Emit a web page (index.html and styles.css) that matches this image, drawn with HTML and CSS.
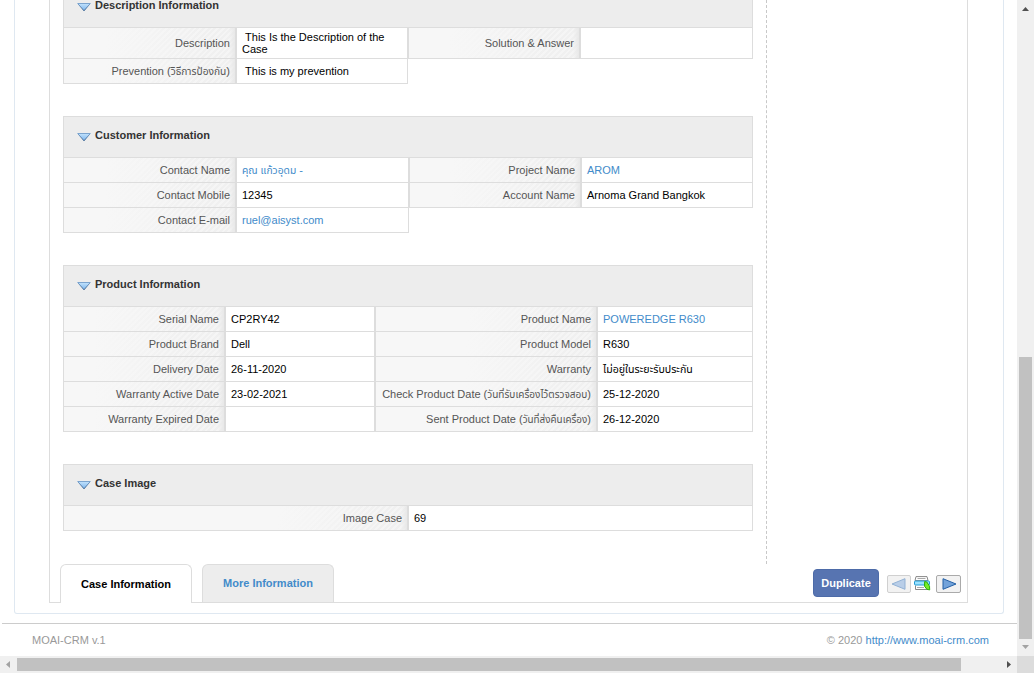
FILE: index.html
```html
<!DOCTYPE html>
<html lang="th">
<head>
<meta charset="utf-8">
<title>MOAI-CRM</title>
<link rel="stylesheet" href="styles.css">
</head>
<body>
<svg class="defs" width="0" height="0" aria-hidden="true">
  <defs>
    <linearGradient id="arrow-fill" x1="0" y1="0" x2="0" y2="1"><stop offset="0" stop-color="#c4e3fc"/><stop offset="1" stop-color="#79b4ee"/></linearGradient>
    <linearGradient id="arrow-line" x1="0" y1="0" x2="0" y2="1"><stop offset="0" stop-color="#7ba4cf"/><stop offset="1" stop-color="#2f5a8a"/></linearGradient>
    <symbol id="chevron" viewBox="0 0 14 9"><path d="M.7.5h12.600L7 7.800z" fill="url(#arrow-fill)" stroke="url(#arrow-line)"/></symbol>
  </defs>
</svg>
<div class="window">
  <div class="viewport">
    <div class="panel">
      <div class="content">
        <div class="details">
          <section class="block block-description">
            <h2><svg class="chevron"><use href="#chevron"/></svg>Description Information</h2>
            <div class="fields cols-description">
              <div class="label">Description</div><div class="value wrap">&nbsp;This Is the Description of the Case</div>
              <div class="label">Solution &amp; Answer</div><div class="value"></div>
              <div class="label">Prevention (<span class="thai t-prevention">วิธีการป้องกัน</span>)</div><div class="value">&nbsp;This is my prevention</div>
            </div>
          </section>
          <section class="block">
            <h2><svg class="chevron"><use href="#chevron"/></svg>Customer Information</h2>
            <div class="fields cols-customer">
              <div class="label">Contact Name</div><div class="value"><a><span class="thai t-contact">คุณ แก้วอุดม</span> -</a></div>
              <div class="label">Project Name</div><div class="value"><a>AROM</a></div>
              <div class="label">Contact Mobile</div><div class="value">12345</div>
              <div class="label">Account Name</div><div class="value">Arnoma Grand Bangkok</div>
              <div class="label">Contact E-mail</div><div class="value"><a>ruel@aisyst.com</a></div>
            </div>
          </section>
          <section class="block">
            <h2><svg class="chevron"><use href="#chevron"/></svg>Product Information</h2>
            <div class="fields cols-product">
              <div class="label">Serial Name</div><div class="value">CP2RY42</div>
              <div class="label">Product Name</div><div class="value"><a>POWEREDGE R630</a></div>
              <div class="label">Product Brand</div><div class="value">Dell</div>
              <div class="label">Product Model</div><div class="value">R630</div>
              <div class="label">Delivery Date</div><div class="value">26-11-2020</div>
              <div class="label">Warranty</div><div class="value"><span class="thai t-warranty">ไม่อยู่ในระยะรับประกัน</span></div>
              <div class="label">Warranty Active Date</div><div class="value">23-02-2021</div>
              <div class="label">Check Product Date (<span class="thai t-check">วันที่รับเครื่องไว้ตรวจสอบ</span>)</div><div class="value">25-12-2020</div>
              <div class="label">Warranty Expired Date</div><div class="value"></div>
              <div class="label">Sent Product Date (<span class="thai t-sent">วันที่ส่งคืนเครื่อง</span>)</div><div class="value">26-12-2020</div>
            </div>
          </section>
          <section class="block">
            <h2><svg class="chevron"><use href="#chevron"/></svg>Case Image</h2>
            <div class="fields cols-image">
              <div class="label">Image Case</div><div class="value">69</div>
            </div>
          </section>
        </div>
        <div class="bottom-bar">
          <div class="tab active">Case Information</div>
          <div class="tab">More Information</div>
          <div class="actions">
            <button class="duplicate">Duplicate</button>
            <button class="nav prev"><svg width="15" height="12" viewBox="0 0 15 12"><path d="M14 .7v10.6L1 6z" fill="#b9cee8" stroke="#92b1d4"/></svg></button>
            <svg class="printer" width="17" height="15" viewBox="0 0 17 15">
              <path d="M2 .6h11l1 4H1z" fill="#fff" stroke="#888"/><path d="M3.500 2.500h8" stroke="#aaa"/>
              <path d="M1.500 9.500v4h12v-4" fill="#fff" stroke="#888"/><path d="M3 11.500h7" stroke="#aaa"/>
              <rect x=".5" y="5" width="15" height="4" rx="1" fill="#9be2ff" stroke="#239bd4"/>
              <path d="M10.600 5.600l2.200.4 2.700 4.200.2 3.700-2.800-.6-2.300-3z" fill="#78ed29" stroke="#2bad08"/>
            </svg>
            <button class="nav next"><svg width="15" height="12" viewBox="0 0 15 12"><path d="M1 .7v10.6L14 6z" fill="#73a3da" stroke="#2560a5"/></svg></button>
          </div>
        </div>
      </div>
    </div>
    <footer><span>MOAI-CRM v.1</span><span>© 2020 <a>http://www.moai-crm.com</a></span></footer>
  </div>
  <div class="scroll-y">
    <svg width="17" height="17"><path d="M5 11h7L8.500 7z" fill="#505050"/></svg>
    <div class="thumb"></div>
    <svg width="17" height="17"><path d="M5 6h7l-3.500 4z" fill="#a3a3a3"/></svg>
  </div>
  <div class="scroll-x">
    <svg width="17" height="17"><path d="M10 5v7L6 8.500z" fill="#a3a3a3"/></svg>
    <div class="thumb"></div>
    <svg width="17" height="17"><path d="M7 5v7l4-3.500z" fill="#505050"/></svg>
  </div>
  <div class="corner"></div>
</div>
</body>
</html>
```
FILE: styles.css
```css
* { box-sizing: border-box; }
body { margin: 0; overflow: hidden; background: #fff; color: #000; font: 11px/12px "Liberation Sans", Arial, sans-serif; }
a { color: #428bca; }
.defs { position: absolute; }
.window { display: grid; grid-template: 656px 17px / 1017px 17px; width: 1034px; height: 673px; }
.viewport { overflow: hidden; }
.panel { width: 990px; height: 614px; margin-left: 14px; padding-left: 34px; border: 1px solid #dfe8f1; border-top: 0; border-radius: 0 0 3px 3px; }
.content { width: 919px; height: 603px; border: 1px solid #ddd; border-top: 0; }
.details { width: 717px; height: 564px; padding-left: 13px; border-right: 1px dashed #c8c8c8; overflow: hidden; }

.block { width: 690px; margin-bottom: 32px; }
.block-description { margin-top: -14px; }
h2 { display: flex; gap: 4px; height: 42px; margin: 0; padding: 12px 0 0 13px; border: 1px solid #ddd; background: #ededed; color: #333; font-size: 11px; line-height: 12px; }
.chevron { width: 14px; height: 9px; margin-top: 4px; }
.fields { display: grid; grid-auto-rows: 25px; }
.cols-description { grid-template: 31px 25px / 173px 172px 172px 173px; }
.cols-customer { grid-template-columns: 173px 173px 172px 172px; }
.cols-product { grid-template-columns: 162px 150px 222px 156px; }
.cols-image { grid-template-columns: 345px 345px; }
.label, .value { border: solid #ddd; border-width: 0 1px 1px; padding: 0 5px; white-space: nowrap; line-height: 24px; overflow: hidden; }
.label {
  color: #555; text-align: right;
  background: linear-gradient(90deg, #f7f7f7 0, #f7f7f7 calc(100% - 130px), rgba(247,247,247,0) calc(100% - 30px)),
    linear-gradient(90deg, transparent calc(100% - 6px), #e8e8e8),
    repeating-linear-gradient(135deg, #f5f5f5 0 2px, #f0f0f0 2px 4px);
}
.cols-description .label:nth-child(-n+4) { line-height: 31px; }
.value.wrap { padding-top: 3px; white-space: normal; line-height: 12px; }
.thai { font-family: "Liberation Sans", "Noto Sans Thai", Loma, sans-serif; line-height: 1; }
.t-prevention { font-size: 10.2px; }
.t-contact { font-size: 10.3px; }
.t-warranty { font-size: 10.6px; }
.t-check { font-size: 10.03px; }
.t-sent { font-size: 9.9px; }

.bottom-bar { display: flex; height: 38px; padding-left: 10px; }
.tab { width: 132px; height: 38px; margin-right: 10px; border: 1px solid #ddd; border-bottom: 0; border-radius: 6px 6px 0 0; background: #ededed; color: #428bca; font-weight: bold; text-align: center; line-height: 37px; }
.tab.active { height: 39px; background: #fff; color: #000; line-height: 39px; }
.actions { display: flex; margin-left: 469px; }
button { padding: 0; font: inherit; }
.duplicate { width: 66px; height: 28px; margin-top: 5px; border: 1px solid #4d6ba8; border-radius: 4px; background: #5774b1; color: #fff; font-weight: bold; }
.nav { display: flex; align-items: center; height: 18px; margin-top: 11px; border: 1px solid #aaa; border-radius: 2px; background: #f2f2f2; }
.prev { width: 24px; margin-left: 8px; padding-left: 3px; border-color: #d0d0d0; }
.printer { margin: 12px 5px 0 3px; }
.next { width: 25px; padding-left: 5px; }

footer { display: flex; justify-content: space-between; margin: 9px 0 0 2px; padding: 10px 28px 0 30px; border-top: 1px solid #ccc; color: #999; }
.scroll-y, .scroll-x { display: flex; background: #f0f0f0; }
.scroll-y { flex-direction: column; justify-content: space-between; }
.scroll-y .thumb { width: 13px; height: 282px; margin: 340px 0 0 2px; background: #c1c1c1; }
.scroll-x { justify-content: space-between; }
.scroll-x .thumb { width: 944px; height: 13px; margin: 2px 39px 0 0; background: #c1c1c1; }
.corner { background: #dcdcdc; }
```
